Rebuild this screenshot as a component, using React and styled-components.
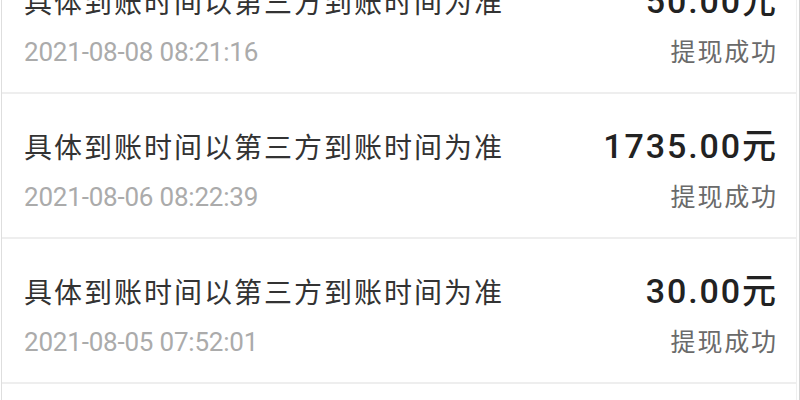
import React from "react";
import styled, { createGlobalStyle } from "styled-components";

const Global = createGlobalStyle`
  html, body { margin: 0; padding: 0; background: #ffffff; overflow: hidden; }
  body { font-family: Roboto, "Noto Sans CJK SC", sans-serif; }
`;

const Frame = styled.div`
  width: 800px;
  height: 400px;
  box-sizing: border-box;
  padding-left: 1px;
  border-right: 1px solid #d4d4d4;
  overflow: hidden;
`;

const List = styled.ul`
  list-style: none;
  margin: -51px 2px 0 0;
  padding: 0;
  border-left: 1px solid #dedede;
  border-right: 1px solid #efefef;
`;

const Row = styled.li`
  box-sizing: border-box;
  height: 145px;
  padding: 32px 20px 0 22px;
  border-bottom: 2px solid #eeeeee;
`;

const Line = styled.div`
  display: flex;
  justify-content: space-between;
  align-items: baseline;
  height: ${(p) => (p.$second ? "32px" : "40px")};
  margin-top: ${(p) => (p.$second ? "13px" : "0")};
`;

const Title = styled.span`
  font-family: "Noto Sans CJK SC", sans-serif;
  font-size: 28px;
  line-height: 36px;
  letter-spacing: 2px;
  color: #333333;
`;

const Amount = styled.span`
  font-family: Roboto, "Noto Sans CJK SC", sans-serif;
  font-size: 34px;
  line-height: 40px;
  font-weight: 500;
  letter-spacing: 1.9px;
  margin-right: -1.9px;
  color: #222222;
`;

const DateText = styled.span`
  font-family: Roboto, sans-serif;
  font-size: 26px;
  line-height: 32px;
  letter-spacing: -0.2px;
  color: #ababab;
`;

const Status = styled.span`
  font-family: "Noto Sans CJK SC", sans-serif;
  font-size: 25px;
  line-height: 32px;
  letter-spacing: 1.8px;
  margin-right: -1.8px;
  color: #6a6a6a;
`;

const records = [
  { time: "2021-08-08 08:21:16", amount: "50.00" },
  { time: "2021-08-06 08:22:39", amount: "1735.00" },
  { time: "2021-08-05 07:52:01", amount: "30.00" },
  { time: "2021-08-04 08:10:45", amount: "20.00" },
];

export default function App() {
  return (
    <>
      <Global />
      <Frame>
        <List>
          {records.map((r) => (
            <Row key={r.time}>
              <Line>
                <Title>具体到账时间以第三方到账时间为准</Title>
                <Amount>{r.amount}元</Amount>
              </Line>
              <Line $second>
                <DateText>{r.time}</DateText>
                <Status>提现成功</Status>
              </Line>
            </Row>
          ))}
        </List>
      </Frame>
    </>
  );
}
